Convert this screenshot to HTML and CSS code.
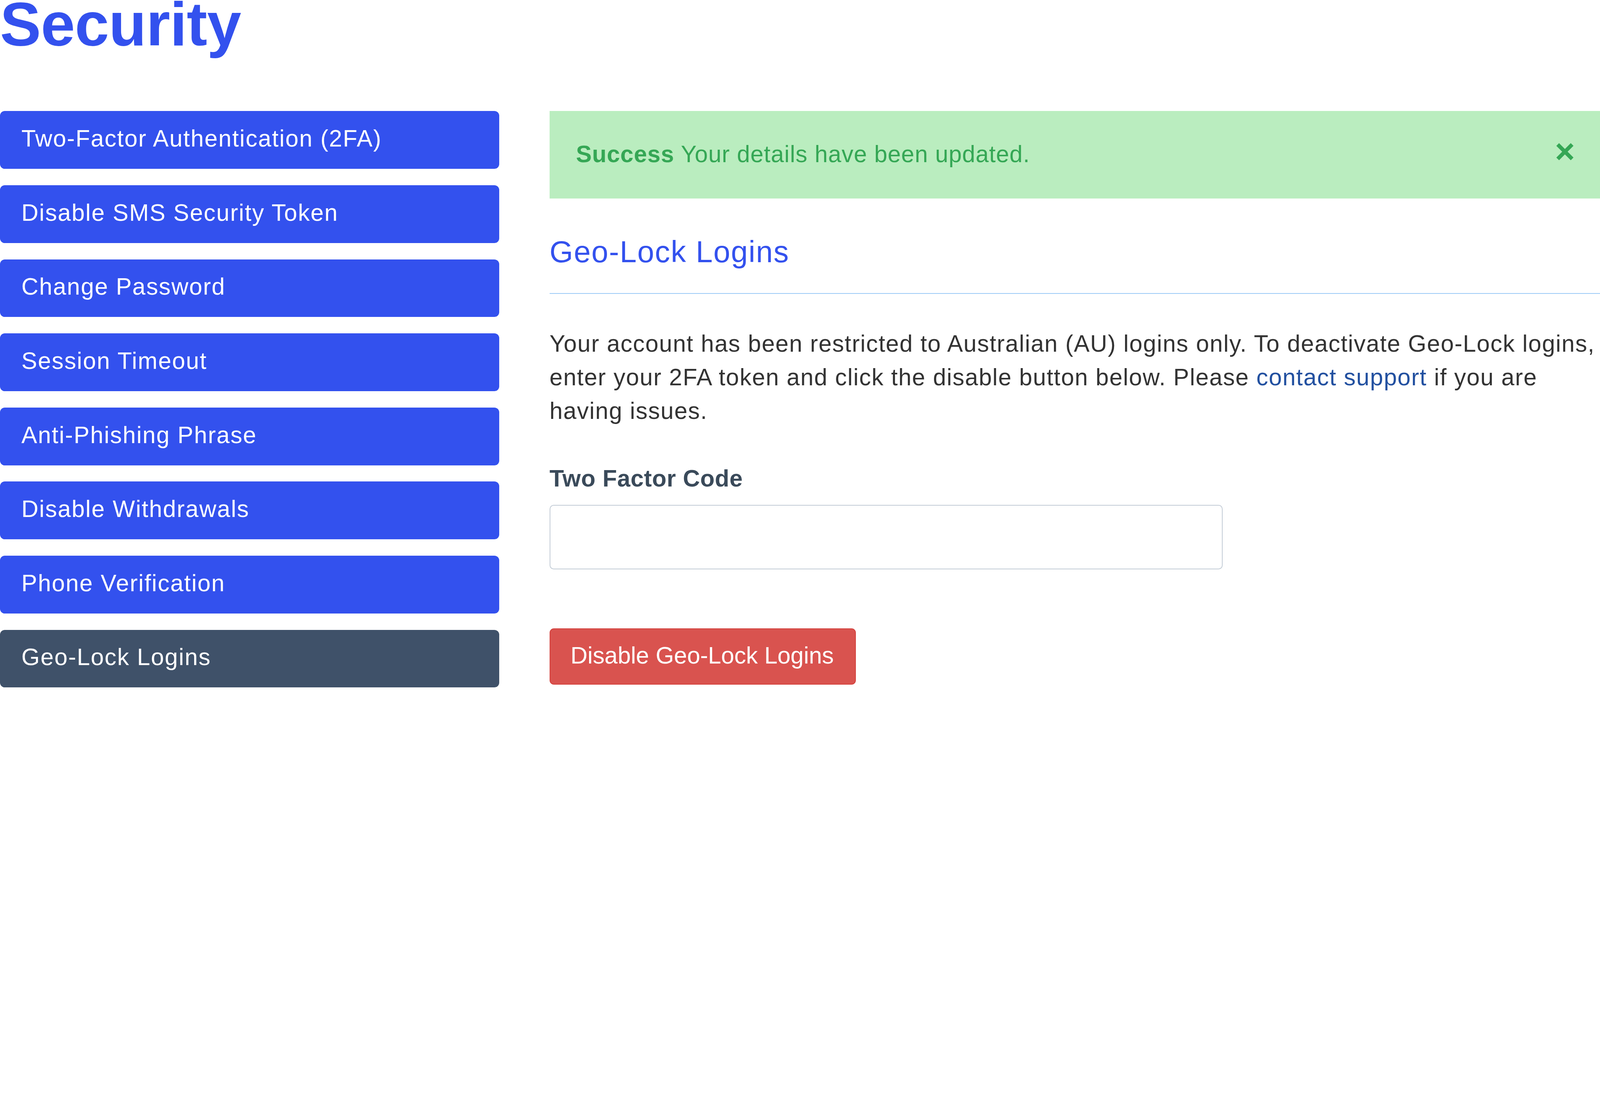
FILE: index.html
```html
<!DOCTYPE html>
<html lang="en">
<head>
<meta charset="utf-8">
<meta name="viewport" content="width=device-width, initial-scale=1">
<title>Security</title>
<link rel="stylesheet" href="styles.css">
</head>
<body>
<div class="page">
  <h1 class="page-title">Security</h1>
  <div class="layout">
    <nav class="side-nav">
      <a class="nav-item" href="#">Two-Factor Authentication (2FA)</a>
      <a class="nav-item" href="#">Disable SMS Security Token</a>
      <a class="nav-item" href="#">Change Password</a>
      <a class="nav-item" href="#">Session Timeout</a>
      <a class="nav-item" href="#">Anti-Phishing Phrase</a>
      <a class="nav-item" href="#">Disable Withdrawals</a>
      <a class="nav-item" href="#">Phone Verification</a>
      <a class="nav-item active" href="#">Geo-Lock Logins</a>
    </nav>
    <main class="content">
      <div class="alert">
        <p class="alert-text"><strong>Success</strong> Your details have been updated.</p>
        <button class="alert-close" type="button" aria-label="Close">
          <svg class="close-icon" viewBox="0 0 72 72"><path d="M6 6 L66 66 M66 6 L6 66" stroke="#35a755" stroke-width="16" fill="none"/></svg>
        </button>
      </div>
      <h2 class="section-title">Geo-Lock Logins</h2>
      <hr class="divider">
      <p class="intro">Your account has been restricted to Australian (AU) logins only. To deactivate Geo-Lock logins, enter your 2FA token and click the disable button below. Please <a class="link" href="#">contact support</a> if you are having issues.</p>
      <form class="geo-form">
        <label class="field-label" for="code">Two Factor Code</label>
        <input class="field-input" id="code" type="text">
        <button class="btn-danger" type="button">Disable Geo-Lock Logins</button>
      </form>
    </main>
  </div>
</div>
</body>
</html>
```
FILE: styles.css
```css
/* 1rem scales with the viewport: the layout is designed on a 66.53rem wide canvas */
html {
  font-size: calc(100vw / 66.53);
}
html, body {
  margin: 0;
  padding: 0;
  background: #ffffff;
}
body {
  font-family: "Liberation Sans", Arial, sans-serif;
  color: #333333;
}
.page-title {
  margin: 0 0 2.62rem;
  font-size: 2.56rem;
  line-height: 2rem;
  font-weight: 700;
  color: #3351ee;
  letter-spacing: -0.01rem;
}
.layout {
  display: grid;
  grid-template-columns: 20.76rem 1fr;
  column-gap: 2.09rem;
  align-items: start;
}
.side-nav {
  display: flex;
  flex-direction: column;
  gap: 0.68rem;
}
.nav-item {
  display: block;
  box-sizing: border-box;
  height: 2.4rem;
  padding: 0.58rem 0 0 0.89rem;
  font-size: 0.98rem;
  line-height: 1.12rem;
  letter-spacing: 0.032rem;
  color: #ffffff;
  background: #3351ee;
  border-radius: 0.2rem;
  text-decoration: none;
  white-space: nowrap;
}
.nav-item.active {
  background: #3f5169;
}
.content {
  min-width: 0;
}
.alert {
  box-sizing: border-box;
  height: 3.63rem;
  padding: 1.22rem 1.1rem 0 1.1rem;
  background: #baedbf;
  display: flex;
  justify-content: space-between;
  align-items: flex-start;
}
.alert-text {
  margin: 0;
  font-size: 0.98rem;
  line-height: 1.12rem;
  letter-spacing: 0.016rem;
  color: #35a755;
}
.alert-text strong {
  font-weight: 700;
}
.alert-close {
  margin: 0.1rem 0 0;
  padding: 0;
  border: 0;
  background: none;
  line-height: 0;
  cursor: pointer;
}
.close-icon {
  display: block;
  width: 0.72rem;
  height: 0.72rem;
}
.section-title {
  margin: 1.46rem 0 0;
  font-size: 1.26rem;
  line-height: 1.51rem;
  font-weight: 400;
  letter-spacing: 0.03rem;
  color: #3351ee;
}
.divider {
  margin: 0.96rem 0 0;
  height: 0.04rem;
  border: 0;
  background: #9ccbf7;
}
.intro {
  margin: 1.36rem 0 0;
  font-size: 0.98rem;
  line-height: 1.4rem;
  letter-spacing: 0.026rem;
  color: #333333;
}
.link {
  color: #2250a0;
  text-decoration: none;
}
.geo-form {
  margin: 0;
}
.field-label {
  display: block;
  margin-top: 1.55rem;
  font-size: 0.98rem;
  line-height: 1.12rem;
  font-weight: 700;
  letter-spacing: 0.011rem;
  color: #3a4a5a;
}
.field-input {
  display: block;
  box-sizing: border-box;
  width: 27.99rem;
  height: 2.67rem;
  margin-top: 0.54rem;
  padding: 0 0.4rem;
  border: 0.04rem solid #c3ccd6;
  border-radius: 0.17rem;
  font-family: inherit;
  font-size: 0.98rem;
  background: #ffffff;
}
.btn-danger {
  display: block;
  margin-top: 2.46rem;
  padding: 0.54rem 0.88rem 0.62rem 0.84rem;
  border: 0.04rem solid #d4413d;
  border-radius: 0.18rem;
  background: #d9534f;
  color: #ffffff;
  font-family: inherit;
  font-size: 0.98rem;
  line-height: 1.12rem;
  cursor: pointer;
}
```
